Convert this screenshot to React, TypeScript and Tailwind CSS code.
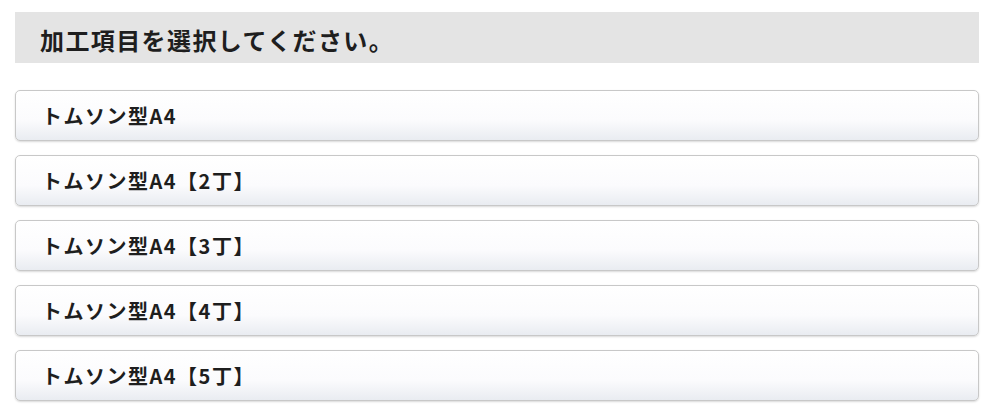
const items = ['トムソン型A4', 'トムソン型A4【2丁】', 'トムソン型A4【3丁】', 'トムソン型A4【4丁】', 'トムソン型A4【5丁】'];

export default function App() {
  return (
    <div
      className="min-h-[420px] bg-white pl-[15px] pr-[17px] pt-[12px] text-[#1e1e1e]"
      style={{ fontFamily: '"Noto Sans CJK JP", "Noto Sans", sans-serif' }}
    >
      <div className="flex h-[51px] items-center bg-[#e4e4e4] pl-[25px] pt-[4px]">
        <h2 className="text-[24px] font-bold tracking-[1.4px]">加工項目を選択してください。</h2>
      </div>
      <ul className="mt-[27px] flex flex-col gap-[14px]">
        {items.map((item) => (
          <li key={item}>
            <button className="flex h-[51px] w-full items-center rounded-[5px] border border-[#c8c8c8] bg-[linear-gradient(#ffffff,#fbfbfd_60%,#e9ecf1)] pl-[26px] text-left text-[20px] font-bold tracking-[1.5px] shadow-[0_1px_2px_rgba(0,0,0,0.15)]">
              {item}
            </button>
          </li>
        ))}
      </ul>
    </div>
  );
}
